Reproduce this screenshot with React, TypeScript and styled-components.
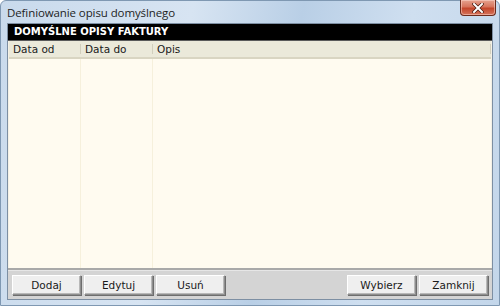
import styled, { createGlobalStyle } from "styled-components";

const GlobalStyle = createGlobalStyle`
  html, body {
    margin: 0;
    padding: 0;
    background: #ffffff;
  }
  body {
    font-family: "DejaVu Sans", "Liberation Sans", sans-serif;
  }
`;

const Window = styled.div`
  width: 500px;
  height: 306px;
  box-sizing: border-box;
  display: flex;
  flex-direction: column;
  padding: 0 6px 5px 6px;
  background: linear-gradient(100deg, #c9daec 0%, #d7e4f2 35%, #b9cfe6 55%, #cfdff0 75%, #c3d6ea 100%);
  border: 1px solid #7f98b2;
  border-radius: 6px 6px 0 0;
`;

const TitleBar = styled.div`
  height: 22px;
  display: flex;
  align-items: flex-start;
  justify-content: space-between;
`;

const Title = styled.div`
  padding-top: 4px;
  font-family: "Open Sans", "Noto Sans", sans-serif;
  font-size: 11.5px;
  color: #1e1e1e;
  letter-spacing: -0.1px;
`;

const CloseButton = styled.div`
  width: 36px;
  height: 16px;
  margin-right: -3px;
  margin-top: -1px;
  box-sizing: border-box;
  border: 1px solid #6b2a1c;
  border-top: none;
  border-radius: 0 0 4px 4px;
  background: linear-gradient(180deg, #e6a390 0%, #d7745c 45%, #c4462b 55%, #d5745c 100%);
  display: flex;
  align-items: center;
  justify-content: center;
  box-shadow: inset 0 0 0 1px rgba(255, 220, 210, 0.5);
`;

const Client = styled.div`
  flex: 1;
  display: flex;
  flex-direction: column;
  border: 1px solid #7d8fa3;
  background: #d6d6d6;
  min-height: 0;
`;

const PanelHeader = styled.div`
  height: 16px;
  background: #000000;
  color: #ffffff;
  font-family: "DejaVu Sans", sans-serif;
  font-weight: bold;
  font-size: 10px;
  line-height: 16px;
  padding-left: 6px;
  border-bottom: 1px solid #5a5a5a;
`;

const Table = styled.div`
  flex: 1;
  display: flex;
  flex-direction: column;
  background: #fffbf0;
  border-left: 1px solid #f4f1e6;
  border-right: 1px solid #f4f1e6;
`;

const HeaderRow = styled.div`
  display: grid;
  grid-template-columns: 72px 72px 1fr;
  height: 16px;
  background: #ebe9da;
  border-bottom: 2px solid #d9d5c2;
`;

const HeaderCell = styled.div`
  font-family: "DejaVu Sans", sans-serif;
  font-size: 10.5px;
  line-height: 16px;
  color: #1a1a1a;
  padding-left: 4px;
  position: relative;
  &::after {
    content: "";
    position: absolute;
    right: 0;
    top: 3px;
    bottom: 3px;
    width: 1px;
    background: #d2cfbd;
  }
`;

const Body = styled.div`
  flex: 1;
  display: grid;
  grid-template-columns: 72px 72px 1fr;
`;

const BodyColumn = styled.div`
  border-right: 1px solid #f6f0dc;
  &:last-child {
    border-right: none;
  }
`;

const Footer = styled.div`
  height: 31px;
  box-sizing: border-box;
  display: flex;
  align-items: center;
  gap: 3px;
  padding: 0 4px 0 4px;
  background: #d4d4d4;
  border-top: 2px solid #a9a9a9;
  box-shadow: inset 0 1px 0 #e6e6e6;
`;

const Spacer = styled.div`
  flex: 1;
`;

const Button = styled.button`
  width: 69px;
  height: 20px;
  box-sizing: border-box;
  padding: 0;
  border: 1px solid #8e8e8e;
  border-top-color: #ffffff;
  border-left-color: #ffffff;
  box-shadow: 1px 1px 0 #6d6d6d, inset -1px -1px 0 #b8b8b8;
  background: #efefef;
  font-family: "DejaVu Sans", sans-serif;
  font-size: 10.5px;
  color: #1a1a1a;
`;

export default function App() {
  return (
    <>
      <GlobalStyle />
      <Window>
        <TitleBar>
          <Title>Definiowanie opisu domyślnego</Title>
          <CloseButton>
            <svg width="12" height="10" viewBox="0 0 12 10">
              <path d="M2 1 L10 9 M10 1 L2 9" stroke="#4a1a10" strokeWidth="3.4" strokeLinecap="square" />
              <path d="M2 1 L10 9 M10 1 L2 9" stroke="#ffffff" strokeWidth="2" strokeLinecap="square" />
            </svg>
          </CloseButton>
        </TitleBar>
        <Client>
          <PanelHeader>DOMYŚLNE OPISY FAKTURY</PanelHeader>
          <Table>
            <HeaderRow>
              <HeaderCell>Data od</HeaderCell>
              <HeaderCell>Data do</HeaderCell>
              <HeaderCell>Opis</HeaderCell>
            </HeaderRow>
            <Body>
              <BodyColumn />
              <BodyColumn />
              <BodyColumn />
            </Body>
          </Table>
          <Footer>
            <Button>Dodaj</Button>
            <Button>Edytuj</Button>
            <Button>Usuń</Button>
            <Spacer />
            <Button>Wybierz</Button>
            <Button>Zamknij</Button>
          </Footer>
        </Client>
      </Window>
    </>
  );
}
